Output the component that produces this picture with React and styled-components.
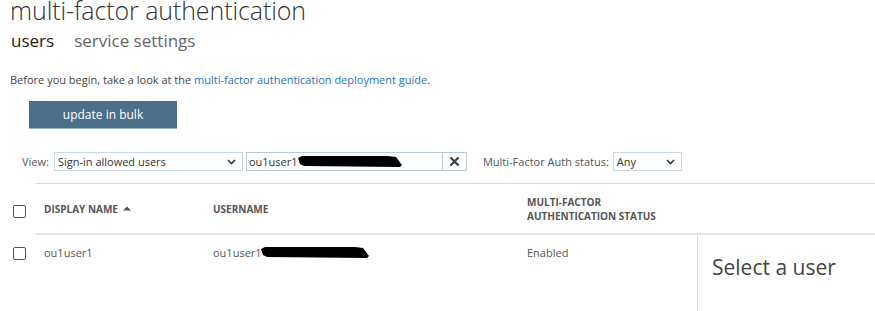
import React from 'react';
import styled, { createGlobalStyle } from 'styled-components';

const Global = createGlobalStyle`
  body {
    margin: 0;
    background: #fff;
    font-family: "Open Sans", "Segoe UI", "Liberation Sans", sans-serif;
    color: #444;
    overflow: hidden;
  }
`;

const Page = styled.div`
  width: 875px;
  height: 311px;
  overflow: hidden;
`;

const Title = styled.h1`
  margin: -8px 0 0 10px;
  font-size: 25px;
  font-weight: 300;
  line-height: 36px;
  color: #333;
  letter-spacing: -0.1px;
`;

const Tabs = styled.div`
  display: flex;
  gap: 20px;
  margin: 2px 0 0 11px;
`;

const Tab = styled.span`
  font-size: 17px;
  line-height: 22px;
  color: ${p => (p.active ? '#222' : '#666')};
`;

const Intro = styled.p`
  margin: 21px 0 0 10px;
  font-size: 11px;
  line-height: 14px;
  color: #444;
  a {
    color: #2672b8;
    text-decoration: none;
  }
`;

const BulkButton = styled.button`
  display: block;
  margin: 14px 0 0 29px;
  width: 148px;
  height: 28px;
  border: none;
  border-bottom: 1px solid #9fb2c2;
  background: #4b6f8b;
  color: #fff;
  font-family: inherit;
  font-size: 12px;
  padding: 0;
`;

const Filters = styled.div`
  display: flex;
  align-items: center;
  margin: 23px 0 0 22px;
  height: 19px;
  font-size: 11px;
`;

const Label = styled.span`
  color: #555;
  margin-right: ${p => p.gap || 5}px;
`;

const Select = styled.div`
  display: flex;
  align-items: center;
  justify-content: space-between;
  box-sizing: border-box;
  width: ${p => p.w}px;
  height: 19px;
  border: 1px solid #c9d8e6;
  padding: 0 6px 0 3px;
  color: #333;
`;

const SearchBox = styled.div`
  display: flex;
  align-items: center;
  box-sizing: border-box;
  width: 197px;
  height: 19px;
  margin-left: 3px;
  border: 1px solid #b9c9d8;
  padding-left: 2px;
  color: #333;
`;

const ClearButton = styled.div`
  box-sizing: border-box;
  width: 24px;
  height: 19px;
  border: 1px solid #b9c9d8;
  border-left: none;
  display: flex;
  align-items: center;
  justify-content: center;
  margin-right: 16px;
`;

const Redact = styled.svg`
  display: block;
  margin-left: ${p => p.ml || 0}px;
`;

const Table = styled.div`
  margin-top: 12px;
`;

const HeadRow = styled.div`
  display: flex;
  align-items: center;
  height: 49px;
  margin-left: 36px;
  border-top: 1px solid #d6dbe0;
  border-bottom: 2px solid #e2e6ea;
  position: relative;
`;

const Body = styled.div`
  display: flex;
  height: 80px;
`;

const Rows = styled.div`
  width: 661px;
  margin-left: 36px;
`;

const Row = styled.div`
  display: flex;
  align-items: center;
  height: 34px;
  position: relative;
`;

const Check = styled.span`
  position: absolute;
  left: -23px;
  top: 50%;
  margin-top: ${p => p.mt || -6}px;
  width: 11px;
  height: 11px;
  border: 1px solid #555;
  border-radius: 2px;
`;

const Cell = styled.div`
  width: ${p => p.w}px;
  padding-left: 8px;
  box-sizing: border-box;
  display: flex;
  align-items: center;
`;

const HeadText = styled.span`
  font-size: 10px;
  font-weight: 700;
  text-transform: uppercase;
  color: #555;
  line-height: 14px;
`;

const CellText = styled.span`
  font-size: 11px;
  color: #555;
`;

const Detail = styled.div`
  flex: 1;
  border-left: 1px solid #d6dbe0;
  padding: 18px 0 0 14px;
  font-size: 21px;
  color: #444;
`;

const Chevron = () => (
  <svg width="9" height="6" viewBox="0 0 9 6">
    <path d="M1 1l3.5 3.5L8 1" fill="none" stroke="#333" strokeWidth="1.6" />
  </svg>
);

const Scribble = ({ w, ml }) => (
  <Redact ml={ml} width={w} height="11" viewBox={`0 0 ${w} 11`}>
    <polygon points={`0,2 4,0 ${w - 14},0 ${w - 6},1 ${w},9 ${w - 2},11 6,10 2,8`} fill="#000" />
  </Redact>
);

export default function App() {
  return (
    <Page>
      <Global />
      <Title>multi-factor authentication</Title>
      <Tabs>
        <Tab active>users</Tab>
        <Tab>service settings</Tab>
      </Tabs>
      <Intro>
        Before you begin, take a look at the <a href="#">multi-factor authentication deployment guide</a>.
      </Intro>
      <BulkButton>update in bulk</BulkButton>
      <Filters>
        <Label>View:</Label>
        <Select w={189}>
          <span>Sign-in allowed users</span>
          <Chevron />
        </Select>
        <SearchBox>
          <span>ou1user1</span>
          <Scribble w={104} ml={0} />
        </SearchBox>
        <ClearButton>
          <svg width="11" height="11" viewBox="0 0 11 11">
            <path d="M1.5 1.5l8 8M9.5 1.5l-8 8" stroke="#444" strokeWidth="2.4" />
          </svg>
        </ClearButton>
        <Label gap={4}>Multi-Factor Auth status:</Label>
        <Select w={69}>
          <span>Any</span>
          <Chevron />
        </Select>
      </Filters>
      <Table>
        <HeadRow>
          <Check mt={-4} />
          <Cell w={169}>
            <HeadText>Display name</HeadText>
            <svg width="8" height="5" viewBox="0 0 8 5" style={{ marginLeft: 5 }}>
              <path d="M0 4.5L4 0.5 8 4.5z" fill="#555" />
            </svg>
          </Cell>
          <Cell w={314}>
            <HeadText>Username</HeadText>
          </Cell>
          <Cell w={200}>
            <HeadText>
              Multi-factor
              <br />
              authentication status
            </HeadText>
          </Cell>
        </HeadRow>
        <Body>
          <Rows>
            <Row>
              <Check mt={-5} />
              <Cell w={169}>
                <CellText>ou1user1</CellText>
              </Cell>
              <Cell w={314}>
                <CellText>ou1user1</CellText>
                <Scribble w={108} ml={-1} />
              </Cell>
              <Cell w={170}>
                <CellText>Enabled</CellText>
              </Cell>
            </Row>
          </Rows>
          <Detail>Select a user</Detail>
        </Body>
      </Table>
    </Page>
  );
}
